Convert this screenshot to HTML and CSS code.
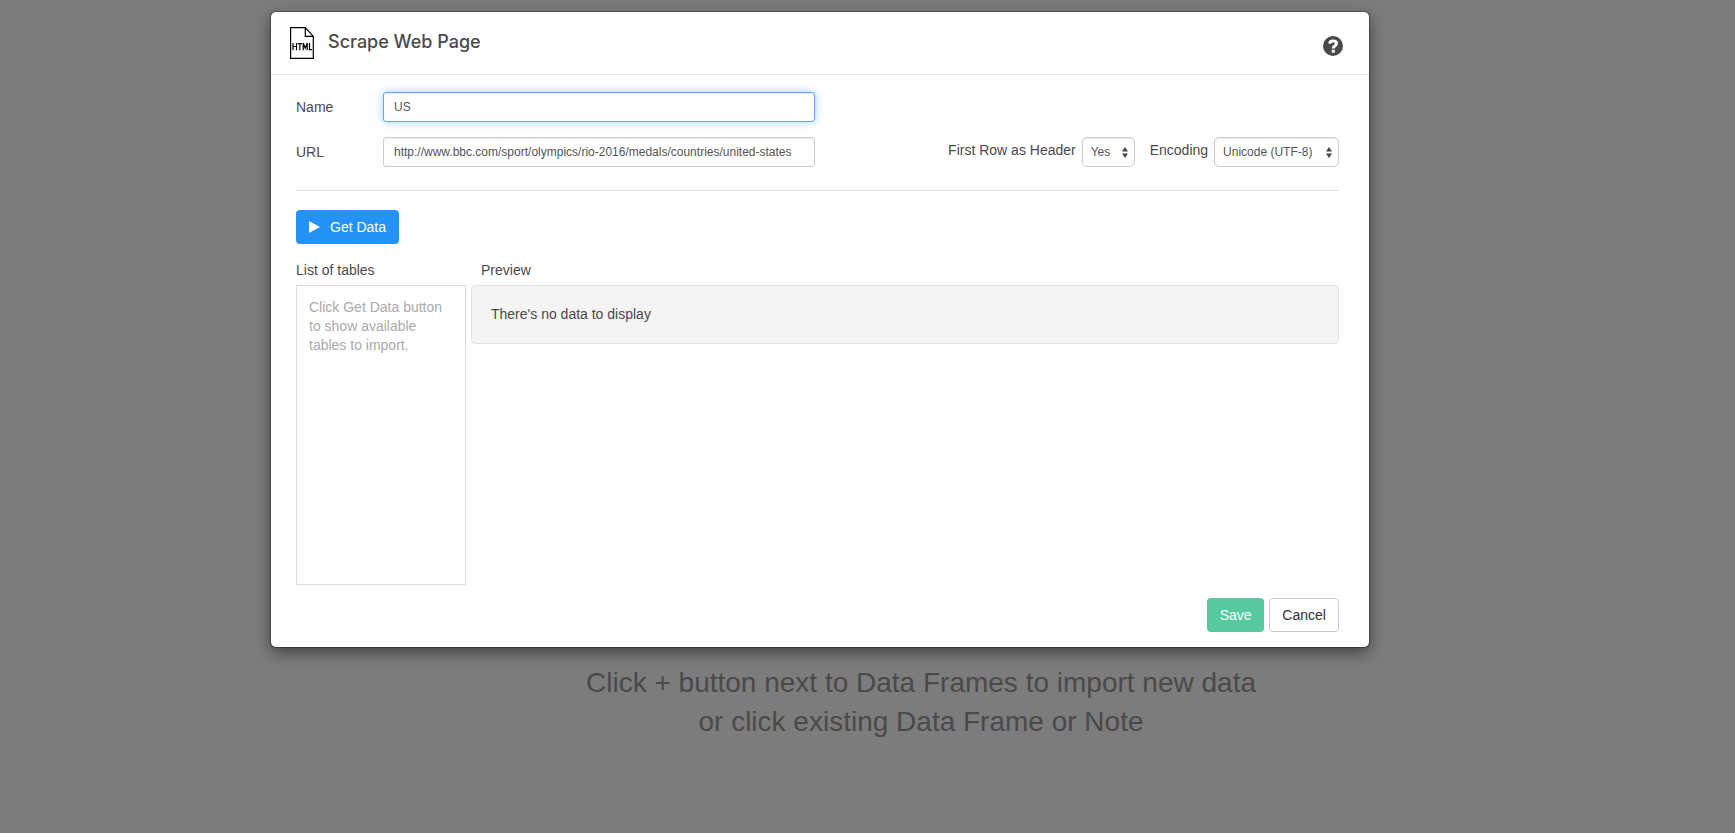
FILE: index.html
```html
<!DOCTYPE html>
<html lang="en">
<head>
<meta charset="utf-8">
<meta name="viewport" content="width=device-width, initial-scale=1">
<title>Scrape Web Page</title>
<link rel="stylesheet" href="styles.css">
</head>
<body>
<form class="modal" role="dialog" aria-labelledby="dialog-title">
  <header class="modal-header">
    <svg class="file-icon" viewBox="0 0 24 32" role="img" aria-label="HTML file">
      <path d="M.6.600h14.700l8 8.800v22H.6zM15.300.600v8.800h8" fill="none" stroke="#000" stroke-width="1.200"/>
      <path d="M3 16v7.200M6.500 16v7.200M3 19.500h3.500M7.700 16.600h4.300M9.850 16.600v6.600M13.200 23.200v-7.200l2 5.200 2-5.200v7.200M19.500 16v6.600h2.500" fill="none" stroke="#000" stroke-width="1.200"/>
    </svg>
    <h1 class="modal-title" id="dialog-title">Scrape Web Page</h1>
    <button class="help" type="button" aria-label="Help">
      <svg class="help-icon" viewBox="0 0 20 20" aria-hidden="true">
        <circle cx="10" cy="10" r="10" fill="#4a4a4a"/>
        <path d="M6.500 7.600C6.900 5.900 8.100 5.100 10 5.100c2.100 0 3.500 1 3.500 2.500 0 2.300-3.200 2.200-3.200 4.800" fill="none" stroke="#fff" stroke-width="3"/>
        <path d="M8.700 13.800h3.200v2.900H8.700z" fill="#fff"/>
      </svg>
    </button>
  </header>
  <main class="modal-body">
    <div class="fields">
      <div class="field">
        <label class="field-label" for="name">Name</label>
        <input class="text-input text-input-active" id="name" type="text" value="US">
      </div>
      <div class="field-row">
        <div class="field">
          <label class="field-label" for="url">URL</label>
          <input class="text-input" id="url" type="text" value="http://www.bbc.com/sport/olympics/rio-2016/medals/countries/united-states">
        </div>
        <div class="options">
          <label class="option-label" for="header-row">First Row as Header</label>
          <span class="select-wrap select-short">
            <select class="select" id="header-row"><option>Yes</option><option>No</option></select>
            <svg class="select-arrows" viewBox="0 0 6 11" aria-hidden="true"><path d="M0 4.500L3 0l3 4.500zM0 6.500L3 11l3-4.500z" fill="#444"/></svg>
          </span>
          <label class="option-label" for="encoding">Encoding</label>
          <span class="select-wrap select-long">
            <select class="select" id="encoding"><option>Unicode (UTF-8)</option></select>
            <svg class="select-arrows" viewBox="0 0 6 11" aria-hidden="true"><path d="M0 4.500L3 0l3 4.500zM0 6.500L3 11l3-4.500z" fill="#444"/></svg>
          </span>
        </div>
      </div>
    </div>
    <button class="button button-primary" type="button">
      <svg class="play-icon" viewBox="0 0 11 12" aria-hidden="true"><path d="M0 0l11 6-11 6z" fill="#fff"/></svg>
      Get Data
    </button>
    <div class="panels">
      <section class="panel">
        <h2 class="panel-title">List of tables</h2>
        <div class="table-list">Click Get Data button to show available tables to import.</div>
      </section>
      <section class="panel">
        <h2 class="panel-title panel-title-inset">Preview</h2>
        <div class="preview">There's no data to display</div>
      </section>
    </div>
  </main>
  <footer class="modal-footer">
    <button class="button button-save" type="button">Save</button>
    <button class="button button-cancel" type="button">Cancel</button>
  </footer>
</form>
<p class="hint">Click + button next to Data Frames to import new data<br>or click existing Data Frame or Note</p>
</body>
</html>
```
FILE: styles.css
```css
* { box-sizing: border-box; }

body {
  margin: 0;
  min-height: 100vh;
  background: #7c7c7c;
  color: #4a4a4a;
  font: 14px/20px "Liberation Sans", Arial, sans-serif;
  display: flow-root;
}

.modal {
  margin: 12px 21.09% 0 15.62%;
  background: #fff;
  border-radius: 5px;
  box-shadow: 0 0 0 1px rgba(0, 0, 0, .3), 0 5px 15px rgba(0, 0, 0, .5);
}

.modal-header {
  display: flex;
  align-items: flex-start;
  gap: 14px;
  height: 63px;
  padding: 15px 26px 0 19px;
  border-bottom: 1px solid #e5e5e5;
}

.file-icon { width: 24px; height: 32px; }

.modal-title {
  flex: 1;
  margin: 0;
  padding-top: 2px;
  font: 500 18px/26px Inter, "Liberation Sans", sans-serif;
}

.help {
  margin: 9px 0 0;
  padding: 0;
  border: 0;
  background: none;
}

.help-icon { display: block; width: 20px; height: 20px; }

.modal-body { padding: 17px 30px 0 25px; }

.fields {
  display: grid;
  gap: 15px;
  padding-bottom: 23px;
  border-bottom: 1px solid #ddd;
}

.field { display: flex; align-items: center; }
.field-label { width: 87px; }

.text-input {
  width: 432px;
  height: 30px;
  padding: 0 10px;
  border: 1px solid #ccc;
  border-radius: 3px;
  background: #fff;
  box-shadow: inset 0 1px 1px rgba(0, 0, 0, .08);
  color: #555;
  font: 12px/18px "Liberation Sans", Arial, sans-serif;
}

.text-input-active {
  border-color: #5fa9ec;
  box-shadow: inset 0 1px 1px rgba(0, 0, 0, .08), 0 0 8px rgba(102, 175, 233, .6);
}

.field-row { display: flex; justify-content: space-between; }
.options { display: flex; }
.option-label { margin-right: 6px; line-height: 27px; }
.select-wrap { position: relative; }
.select-short { width: 53px; margin-right: 15px; }
.select-long { width: 125px; }

.select {
  appearance: none;
  width: 100%;
  height: 30px;
  padding: 0 8px;
  border: 1px solid #ccc;
  border-radius: 5px;
  background: #fff;
  box-shadow: inset 0 1px 1px rgba(0, 0, 0, .08);
  color: #555;
  font: 12px/18px "Liberation Sans", Arial, sans-serif;
}

.select-arrows {
  position: absolute;
  top: 10px;
  right: 7px;
  width: 6px;
  height: 11px;
  pointer-events: none;
}

.button {
  display: inline-flex;
  align-items: center;
  justify-content: center;
  height: 34px;
  padding: 0 13px;
  border: 0;
  border-radius: 4px;
  color: #fff;
  font: 14px/20px "Liberation Sans", Arial, sans-serif;
}

.button-primary { gap: 10px; margin-top: 19px; background: #2492f7; }
.button-save { width: 57px; padding: 0; background: #57c99f; }
.button-cancel { width: 70px; padding: 0; border: 1px solid #ccc; background: #fff; color: #333; }
.play-icon { width: 11px; height: 12px; }

.panels {
  display: grid;
  grid-template-columns: 170px 1fr;
  gap: 5px;
  margin-top: 16px;
}

.panel-title { margin: 0 0 5px; font-size: 14px; font-weight: 400; line-height: 20px; }
.panel-title-inset { padding-left: 10px; }

.table-list {
  height: 300px;
  padding: 12px;
  border: 1px solid #ddd;
  color: #aaa;
  line-height: 19px;
}

.preview {
  padding: 18px 19px;
  border: 1px solid #e3e3e3;
  border-radius: 4px;
  background: #f4f4f4;
  line-height: 21px;
}

.modal-footer {
  display: flex;
  justify-content: flex-end;
  gap: 5px;
  padding: 13px 30px 15px;
}

.hint {
  margin: 16px 0 0;
  padding-left: 107px;
  text-align: center;
  font-size: 28px;
  line-height: 39px;
}
```
